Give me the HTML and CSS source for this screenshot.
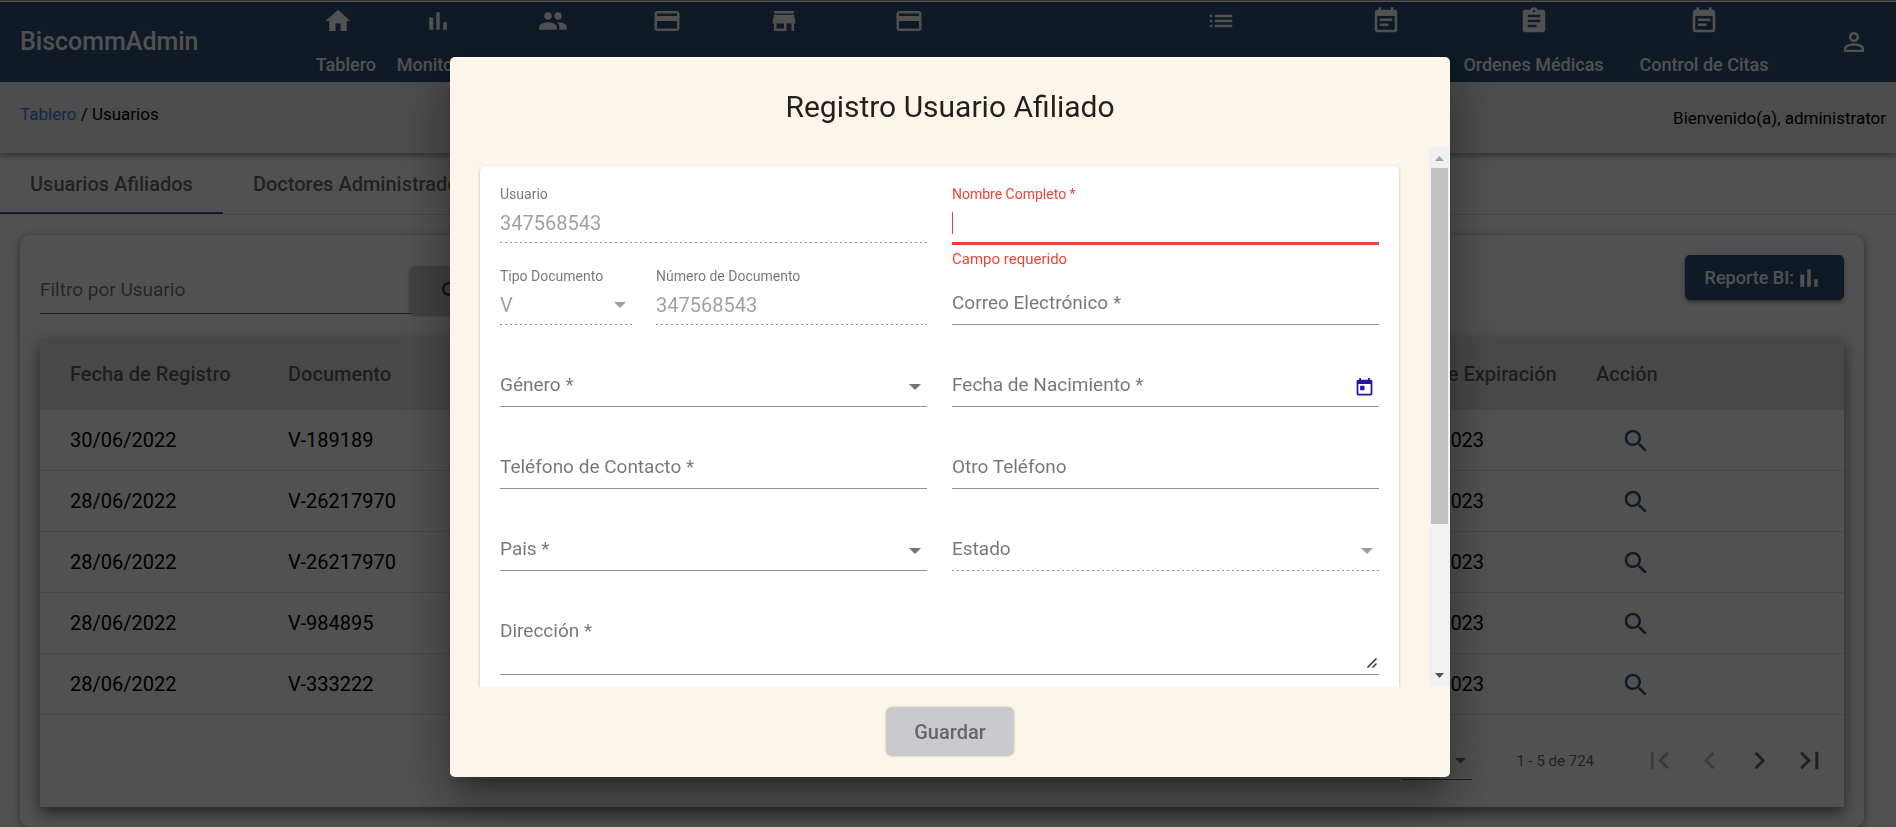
FILE: index.html
```html
<!DOCTYPE html>
<html lang="es">
<head>
<meta charset="utf-8">
<meta name="viewport" content="width=device-width, initial-scale=1">
<title>BiscommAdmin</title>
<link rel="stylesheet" href="styles.css">
</head>
<body>
<svg class="sprite" aria-hidden="true">
  <symbol id="i-home" viewBox="0 0 24 24"><path d="M10 20v-6h4v6h5v-8h3L12 3 2 12h3v8z"/></symbol>
  <symbol id="i-bars" viewBox="0 0 24 24"><path d="M5 9.200h3.200V19H5zM10.600 5h2.800v14h-2.800zM16.200 13H19v6h-2.800z"/></symbol>
  <symbol id="i-people" viewBox="0 0 24 24"><path d="M16 11c1.66 0 2.99-1.34 2.99-3S17.66 5 16 5s-3 1.34-3 3 1.34 3 3 3zm-8 0c1.66 0 2.99-1.34 2.99-3S9.66 5 8 5 5 6.34 5 8s1.34 3 3 3zm0 2c-2.33 0-7 1.17-7 3.5V19h14v-2.5c0-2.33-4.67-3.5-7-3.5zm8 0c-.29 0-.62.02-.97.05 1.16.84 1.97 1.97 1.97 3.45V19h6v-2.5c0-2.33-4.67-3.5-7-3.5z"/></symbol>
  <symbol id="i-card" viewBox="0 0 24 24"><path d="M20 4H4c-1.11 0-1.99.89-1.99 2L2 18c0 1.11.89 2 2 2h16c1.11 0 2-.89 2-2V6c0-1.11-.89-2-2-2zm0 14H4v-6h16v6zm0-10H4V6h16v2z"/></symbol>
  <symbol id="i-store" viewBox="0 0 24 24"><path d="M20 4H4v2h16V4zm1 10v-2l-1-5H4l-1 5v2h1v6h10v-6h4v6h2v-6h1zm-9 4H6v-4h6v4z"/></symbol>
  <symbol id="i-list" viewBox="0 0 24 24"><path d="M3 13h2v-2H3v2zm0 4h2v-2H3v2zm0-8h2V7H3v2zm4 4h14v-2H7v2zm0 4h14v-2H7v2zM7 7v2h14V7H7z"/></symbol>
  <symbol id="i-note" viewBox="0 0 24 24"><path d="M17 10H7v2h10v-2zm2-7h-1V1h-2v2H8V1H6v2H5c-1.11 0-1.99.9-1.99 2L3 19c0 1.1.89 2 2 2h14c1.1 0 2-.9 2-2V5c0-1.1-.9-2-2-2zm0 16H5V8h14v11zm-5-5H7v2h7v-2z"/></symbol>
  <symbol id="i-assignment" viewBox="0 0 24 24"><path d="M19 3h-4.18C14.4 1.84 13.3 1 12 1c-1.3 0-2.4.84-2.82 2H5c-1.1 0-2 .9-2 2v14c0 1.1.9 2 2 2h14c1.1 0 2-.9 2-2V5c0-1.1-.9-2-2-2zm-7 0c.55 0 1 .45 1 1s-.45 1-1 1-1-.45-1-1 .45-1 1-1zm2 14H7v-2h7v2zm3-4H7v-2h10v2zm0-4H7V7h10v2z"/></symbol>
  <symbol id="i-person" viewBox="0 0 24 24"><path d="M12 5.9c1.16 0 2.1.94 2.1 2.1s-.94 2.1-2.1 2.1S9.900 9.160 9.900 8s.94-2.1 2.1-2.1m0 9c2.97 0 6.1 1.46 6.1 2.1v1.1H5.9V17c0-.64 3.130-2.1 6.1-2.1M12 4C9.790 4 8 5.790 8 8s1.790 4 4 4 4-1.790 4-4-1.790-4-4-4zm0 9c-2.670 0-8 1.340-8 4v3h16v-3c0-2.660-5.330-4-8-4z"/></symbol>
  <symbol id="i-search" viewBox="0 0 24 24"><path d="M15.500 14h-.79l-.28-.27C15.410 12.590 16 11.110 16 9.500 16 5.910 13.090 3 9.500 3S3 5.910 3 9.500 5.910 16 9.500 16c1.610 0 3.090-.59 4.230-1.570l.27.28v.79l5 4.990L20.490 19l-4.990-5zm-6 0C7.010 14 5 11.990 5 9.500S7.010 5 9.500 5 14 7.010 14 9.500 11.990 14 9.500 14z"/></symbol>
  <symbol id="i-today" viewBox="0 0 24 24"><path d="M19 3h-1V1h-2v2H8V1H6v2H5c-1.110 0-1.990.9-1.990 2L3 19c0 1.100.89 2 2 2h14c1.100 0 2-.9 2-2V5c0-1.100-.9-2-2-2zm0 16H5V8h14v11zM7 10h5v5H7z"/></symbol>
  <symbol id="i-first" viewBox="0 0 24 24"><path d="M18.410 16.590L13.820 12l4.590-4.590L17 6l-6 6 6 6zM6 6h2v12H6z"/></symbol>
  <symbol id="i-prev" viewBox="0 0 24 24"><path d="M15.410 7.410L14 6l-6 6 6 6 1.410-1.410L10.830 12z"/></symbol>
  <symbol id="i-next" viewBox="0 0 24 24"><path d="M10 6L8.590 7.410 13.170 12l-4.580 4.590L10 18l6-6z"/></symbol>
  <symbol id="i-last" viewBox="0 0 24 24"><path d="M5.590 7.410L10.180 12l-4.590 4.590L7 18l6-6-6-6zM16 6h2v12h-2z"/></symbol>
</svg>

<header class="topbar">
  <div class="brand">BiscommAdmin</div>
  <nav class="nav" aria-label="Principal">
    <a class="nav-item nav-item--first" href="#"><svg class="icon"><use href="#i-home"/></svg><span>Tablero</span></a>
    <a class="nav-item" href="#"><svg class="icon"><use href="#i-bars"/></svg><span>Monitoreo</span></a>
    <a class="nav-item" href="#"><svg class="icon"><use href="#i-people"/></svg></a>
    <a class="nav-item" href="#"><svg class="icon"><use href="#i-card"/></svg></a>
    <a class="nav-item" href="#"><svg class="icon"><use href="#i-store"/></svg></a>
    <a class="nav-item" href="#"><svg class="icon"><use href="#i-card"/></svg></a>
    <a class="nav-item nav-item--list" href="#"><svg class="icon"><use href="#i-list"/></svg></a>
    <a class="nav-item" href="#"><svg class="icon"><use href="#i-note"/></svg></a>
    <a class="nav-item" href="#"><svg class="icon"><use href="#i-assignment"/></svg><span>Ordenes Médicas</span></a>
    <a class="nav-item" href="#"><svg class="icon"><use href="#i-note"/></svg><span>Control de Citas</span></a>
  </nav>
  <button class="icon-button account" type="button"><svg class="icon"><use href="#i-person"/></svg></button>
</header>

<div class="crumbs">
  <div class="crumbs-path"><a href="#">Tablero</a> / Usuarios</div>
  <div class="crumbs-user">Bienvenido(a), administrator</div>
</div>

<div class="tabs">
  <button class="tab tab--active" type="button">Usuarios Afiliados</button>
  <button class="tab" type="button">Doctores Administradores</button>
</div>

<main class="panel">
  <div class="toolbar">
    <div class="filter">
      <input class="filter-input" type="text" placeholder="Filtro por Usuario" aria-label="Filtro por Usuario">
      <button class="filter-button" type="button"><svg class="icon icon--small"><use href="#i-search"/></svg></button>
    </div>
    <button class="report" type="button">Reporte BI: <svg class="icon"><use href="#i-bars"/></svg></button>
  </div>
  <div class="sheet">
    <table class="grid">
      <colgroup><col class="col-date"><col class="col-doc"><col><col class="col-exp"><col class="col-act"></colgroup>
      <thead><tr><th>Fecha de Registro</th><th>Documento</th><th></th><th>Fecha de Expiración</th><th>Acción</th></tr></thead>
      <tbody>
        <tr><td>30/06/2022</td><td>V-189189</td><td></td><td>30/06/2023</td><td><button class="icon-button view" type="button"><svg class="icon"><use href="#i-search"/></svg></button></td></tr>
        <tr><td>28/06/2022</td><td>V-26217970</td><td></td><td>28/06/2023</td><td><button class="icon-button view" type="button"><svg class="icon"><use href="#i-search"/></svg></button></td></tr>
        <tr><td>28/06/2022</td><td>V-26217970</td><td></td><td>28/06/2023</td><td><button class="icon-button view" type="button"><svg class="icon"><use href="#i-search"/></svg></button></td></tr>
        <tr><td>28/06/2022</td><td>V-984895</td><td></td><td>28/06/2023</td><td><button class="icon-button view" type="button"><svg class="icon"><use href="#i-search"/></svg></button></td></tr>
        <tr><td>28/06/2022</td><td>V-333222</td><td></td><td>28/06/2023</td><td><button class="icon-button view" type="button"><svg class="icon"><use href="#i-search"/></svg></button></td></tr>
      </tbody>
    </table>
    <div class="pager">
      <div class="pager-size"><select class="pager-select" aria-label="Filas"><option>5</option></select><span class="arrow"></span></div>
      <div class="pager-range">1 - 5 de 724</div>
      <div class="pager-buttons">
        <button class="icon-button" type="button" disabled><svg class="icon"><use href="#i-first"/></svg></button>
        <button class="icon-button" type="button" disabled><svg class="icon"><use href="#i-prev"/></svg></button>
        <button class="icon-button" type="button"><svg class="icon"><use href="#i-next"/></svg></button>
        <button class="icon-button" type="button"><svg class="icon"><use href="#i-last"/></svg></button>
      </div>
    </div>
  </div>
</main>

<div class="backdrop">
  <section class="dialog" role="dialog" aria-labelledby="dialog-title">
    <h1 class="dialog-title" id="dialog-title">Registro Usuario Afiliado</h1>
    <div class="dialog-body">
      <div class="dialog-scroll">
        <form class="form" id="user-form">
          <div class="field field--disabled">
            <label for="usuario">Usuario</label>
            <input id="usuario" type="text" value="347568543" disabled>
          </div>
          <div class="field field--error">
            <label for="nombre">Nombre Completo *</label>
            <input id="nombre" type="text" aria-describedby="nombre-error">
            <span class="caret"></span>
            <p class="error" id="nombre-error">Campo requerido</p>
          </div>
          <div class="pair">
            <div class="field field--disabled">
              <label for="tipo">Tipo Documento</label>
              <select id="tipo" disabled><option>V</option></select>
              <span class="arrow"></span>
            </div>
            <div class="field field--disabled">
              <label for="numero">Número de Documento</label>
              <input id="numero" type="text" value="347568543" disabled>
            </div>
          </div>
          <div class="field field--empty">
            <label for="correo">Correo Electrónico *</label>
            <input id="correo" type="email">
          </div>
          <div class="field field--empty">
            <label for="genero">Género *</label>
            <select id="genero"><option></option></select>
            <span class="arrow"></span>
          </div>
          <div class="field field--empty">
            <label for="nacimiento">Fecha de Nacimiento *</label>
            <input id="nacimiento" type="text">
            <button class="icon-button calendar" type="button"><svg class="icon"><use href="#i-today"/></svg></button>
          </div>
          <div class="field field--empty">
            <label for="telefono">Teléfono de Contacto *</label>
            <input id="telefono" type="tel">
          </div>
          <div class="field field--empty">
            <label for="otro">Otro Teléfono</label>
            <input id="otro" type="tel">
          </div>
          <div class="field field--empty">
            <label for="pais">Pais *</label>
            <select id="pais"><option></option></select>
            <span class="arrow"></span>
          </div>
          <div class="field field--empty field--disabled">
            <label for="estado">Estado</label>
            <select id="estado" disabled><option></option></select>
            <span class="arrow"></span>
          </div>
          <div class="field field--empty field--area">
            <label for="direccion">Dirección *</label>
            <textarea id="direccion"></textarea>
            <svg class="grip" viewBox="0 0 10 10"><path d="M0.500 9.500L9.500 0.500M5.500 9.500L9.500 5.500"/></svg>
          </div>
        </form>
      </div>
      <div class="scrollbar" aria-hidden="true">
        <svg class="scroll-arrow scroll-arrow--off" viewBox="0 0 21 21"><path d="M6 14h9l-4.500-5z"/></svg>
        <div class="scroll-thumb"></div>
        <svg class="scroll-arrow" viewBox="0 0 21 21"><path d="M6 7h9l-4.500 5z"/></svg>
      </div>
    </div>
    <footer class="dialog-actions"><button class="save" type="submit" form="user-form" disabled>Guardar</button></footer>
  </section>
</div>
</body>
</html>
```
FILE: styles.css
```css
* { box-sizing: border-box; }
html, body { margin: 0; }
body {
  height: 100vh;
  overflow: hidden;
  background: #fafafa;
  border-top: 1px solid #b4a9a6;
  font-family: Roboto, "Liberation Sans", sans-serif;
  font-size: 18px;
  color: #000;
}
button, input, select, textarea { font: inherit; color: inherit; }
button { border: 0; background: none; padding: 0; }
.sprite { position: absolute; width: 0; height: 0; }
.icon { display: block; width: 30px; height: 30px; fill: currentColor; flex: none; }
.icon--small { width: 25px; height: 25px; }
.icon-button { display: flex; align-items: center; justify-content: center; }

.topbar {
  display: flex;
  align-items: center;
  height: 81px;
  padding: 0 27px 0 20px;
  border-top: 1px solid #fafafa;
  background: #2f5177;
  color: #fafafa;
}
.brand { width: 280px; flex: none; font-size: 25px; font-weight: 500; line-height: 34px; }
.nav {
  flex: 1;
  align-self: stretch;
  display: grid;
  grid-template-columns: 76fr 124fr 106fr 122fr 112fr 138fr 157fr 172fr 158fr 137fr 204fr;
}
.nav-item {
  display: flex;
  flex-direction: column;
  align-items: center;
  gap: 18px;
  padding-top: 4px;
  min-width: 0;
  color: inherit;
  font-weight: 500;
  line-height: 22px;
  text-decoration: none;
  white-space: nowrap;
}
.nav-item--first span { align-self: flex-end; }
.nav-item--list { grid-column: 8; }
.account { margin-left: 33px; }

.crumbs {
  position: relative;
  display: flex;
  justify-content: space-between;
  height: 71px;
  padding: 20px 10px 0 20px;
  background: #ebebeb;
  box-shadow: 0 3px 6px rgba(0, 0, 0, .35);
  font-size: 17px;
  line-height: 24px;
}
.crumbs a { color: #2f80ed; text-decoration: none; }
.crumbs-user { padding-top: 4px; }

.tabs { display: flex; border-bottom: 1px solid #dedede; }
.tab {
  height: 61px;
  padding: 2px 30px 0;
  border-bottom: 2px solid transparent;
  font-size: 20px;
  font-weight: 500;
  color: rgba(0, 0, 0, .6);
}
.tab--active { border-color: #3f51b5; }

.panel {
  margin: 20px 32px 0 20px;
  padding: 20px;
  border-radius: 10px;
  background: #fafafa;
  box-shadow: 0 2px 8px rgba(0, 0, 0, .4);
}
.toolbar { display: flex; justify-content: space-between; align-items: flex-start; height: 84px; }
.filter {
  display: flex;
  align-items: flex-end;
  width: 452px;
  height: 59px;
  border-bottom: 1px solid rgba(0, 0, 0, .6);
}
.filter-input {
  flex: 1;
  min-width: 0;
  height: 48px;
  padding: 0;
  border: 0;
  background: none;
  font-size: 19px;
}
.filter-input::placeholder { color: rgba(0, 0, 0, .55); opacity: 1; }
.filter-button {
  display: flex;
  align-items: center;
  justify-content: center;
  width: 82px;
  height: 48px;
  margin-bottom: -2px;
  border-radius: 5px;
  background: #cacace;
  box-shadow: 0 0 3px rgba(0, 0, 0, .5);
  color: rgba(0, 0, 0, .8);
}
.report {
  display: flex;
  align-items: center;
  height: 45px;
  padding: 0 20px;
  border-radius: 5px;
  background: #2f5177;
  box-shadow: 0 2px 4px rgba(0, 0, 0, .4);
  color: #fafafa;
  font-weight: 500;
}

.sheet { background: #fafafa; box-shadow: 0 6px 14px rgba(0, 0, 0, .55); }
.grid { width: 100%; border-collapse: collapse; table-layout: fixed; font-size: 20px; }
.grid th, .grid td { padding: 0; border-bottom: 1px solid #dedede; text-align: left; white-space: nowrap; }
.grid th { height: 70px; background: #e1e1e1; font-weight: 500; color: rgba(0, 0, 0, .6); }
.grid td { height: 61px; }
.grid th:first-child, .grid td:first-child { padding-left: 30px; }
.col-date, .col-act { width: 13.75%; }
.col-doc { width: 12%; }
.col-exp { width: 12.1%; }
.view { margin: 2px 0 0 25px; color: #2f5177; }

.pager {
  display: flex;
  align-items: center;
  justify-content: flex-end;
  height: 92px;
  padding-right: 10px;
  font-size: 15px;
  color: rgba(0, 0, 0, .6);
}
.pager-size {
  display: grid;
  align-items: center;
  align-self: flex-start;
  width: 70px;
  height: 38px;
  margin-top: 27px;
  border-bottom: 1px solid rgba(0, 0, 0, .6);
}
.pager-size > * { grid-area: 1 / 1; }
.pager-select { appearance: none; border: 0; background: none; padding: 0; height: 38px; }
.pager-range { margin: 0 40px 0 44px; }
.pager-buttons { display: flex; }
.pager-buttons .icon-button { width: 50px; height: 50px; color: rgba(0, 0, 0, .6); }
.pager-buttons .icon-button:disabled { color: rgba(0, 0, 0, .26); }
.pager-buttons .icon { width: 35px; height: 35px; }

.arrow {
  justify-self: end;
  width: 12px;
  height: 6px;
  margin-right: 6px;
  background: currentColor;
  clip-path: polygon(0 0, 100% 0, 50% 100%);
  pointer-events: none;
}

.backdrop {
  position: fixed;
  inset: 0;
  display: flex;
  align-items: flex-start;
  justify-content: center;
  padding: 57px 0 0 4px;
  background: rgba(0, 0, 0, .68);
}
.dialog {
  width: 1000px;
  max-width: 80vw;
  border-radius: 5px;
  background: #fcf5e9;
  box-shadow: 0 14px 19px -9px rgba(0, 0, 0, .3), 0 30px 48px 4px rgba(0, 0, 0, .2), 0 11px 58px 10px rgba(0, 0, 0, .16);
}
.dialog-title {
  margin: 0;
  padding: 30px 0 20px;
  font-size: 30px;
  font-weight: 400;
  line-height: 40px;
  text-align: center;
  color: rgba(0, 0, 0, .87);
}
.dialog-body { display: flex; height: 540px; }
.dialog-scroll { flex: 1; min-width: 0; overflow: hidden; padding: 19px 30px 0; }
.dialog-actions { display: flex; justify-content: center; padding: 21px 0 22px; }
.save {
  height: 47px;
  padding: 0 27px;
  border-radius: 5px;
  background: #cacace;
  box-shadow: 0 0 3px rgba(0, 0, 0, .5);
  font-size: 20px;
  font-weight: 500;
  color: #666669;
}

.form {
  display: grid;
  grid-template-columns: 1fr 1fr;
  column-gap: 25px;
  padding: 20px 20px 80px;
  border-radius: 5px;
  background: #fff;
  box-shadow: 0 1px 3px rgba(0, 0, 0, .25);
}
.pair { display: grid; grid-template-columns: 132fr 271fr; column-gap: 24px; }
.field {
  display: grid;
  grid-template: 17px 40px 25px / 100%;
  color: rgba(0, 0, 0, .54);
}
.field > * { grid-area: 2 / 1; }
.field > label { grid-row: 1; font-size: 14px; line-height: 16px; }
.field--empty > label { grid-row: 2; font-size: 19px; line-height: 36px; pointer-events: none; }
.field input, .field select, .field textarea {
  appearance: none;
  width: 100%;
  height: 40px;
  margin: 0;
  padding: 0;
  border: 0;
  border-bottom: 1px solid #8f8f8f;
  border-radius: 0;
  background: none;
  font-size: 20px;
  color: rgba(0, 0, 0, .87);
  outline: 0;
  opacity: 1;
}
.field .arrow { align-self: center; }
.field--disabled input, .field--disabled select {
  border-bottom: 0;
  background: repeating-linear-gradient(90deg, #949494 0 2px, transparent 2px 5px) left bottom / 100% 1px no-repeat;
  color: rgba(0, 0, 0, .38);
}
.field--disabled .arrow { color: rgba(0, 0, 0, .38); }
.field--error, .field--error label { color: #f44336; }
.field--error input { height: 42px; border-bottom: 3px solid #f44336; }
.field .caret { width: 1px; height: 22px; margin-top: 9px; background: #f44336; }
.field .error { grid-row: 3; margin: 7px 0 0; font-size: 15px; line-height: 18px; }
.field .calendar { align-self: center; justify-self: end; margin-right: 4px; color: #2015a8; }
.calendar .icon { width: 21px; height: 21px; }
.field--area { grid-column: 1 / -1; grid-template-rows: 17px 62px 25px; }
.field--area textarea { height: 62px; resize: none; }
.grip { place-self: end; width: 10px; height: 10px; margin: 0 2px 7px 0; stroke: #333; stroke-width: 1.5; fill: none; }

.scrollbar {
  display: flex;
  flex-direction: column;
  width: 21px;
  background: #f1f1f1;
}
.scroll-arrow { width: 21px; height: 21px; fill: #505050; }
.scroll-arrow--off { fill: #a3a3a3; }
.scroll-thumb { height: 356px; margin: 0 2px auto; background: #c1c1c1; }
```
